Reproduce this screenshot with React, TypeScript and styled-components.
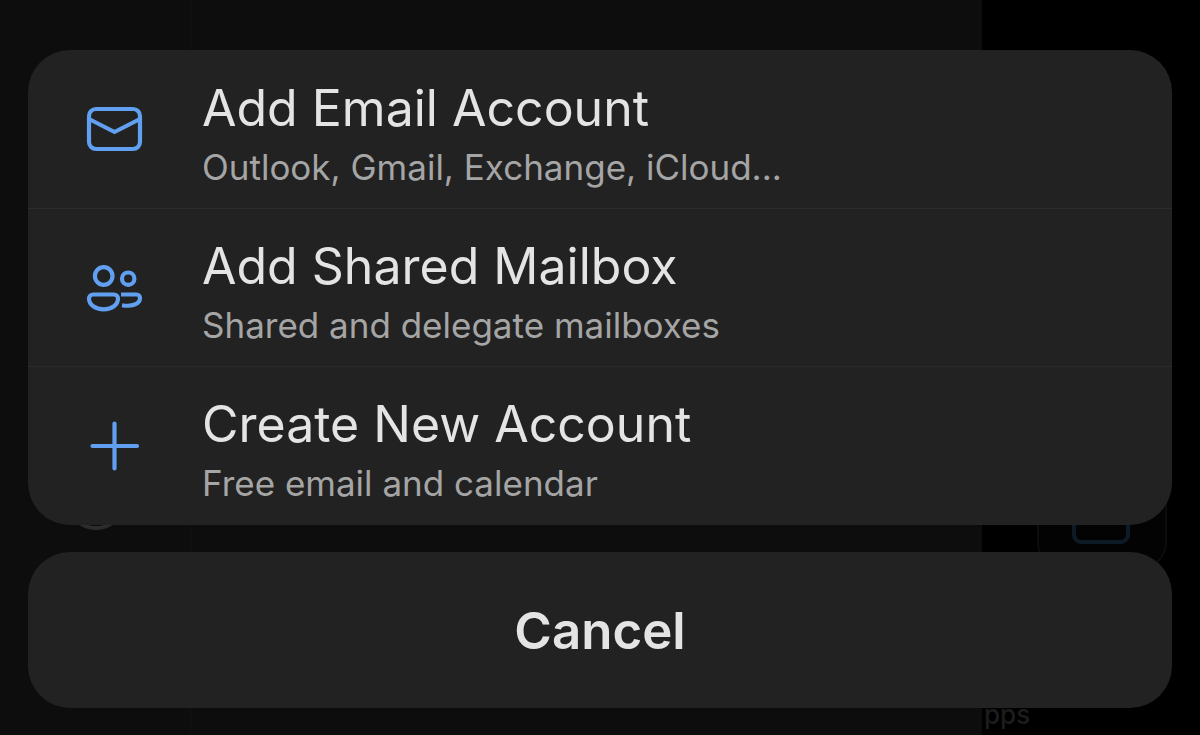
import React from "react";
import styled, { createGlobalStyle } from "styled-components";

const GlobalStyle = createGlobalStyle`
  * { box-sizing: border-box; }
  body {
    margin: 0;
    background: #000;
    font-family: Inter, "Liberation Sans", sans-serif;
  }
`;

const Screen = styled.div`
  display: grid;
  min-height: 100vh;
  overflow: hidden;
  > * { grid-area: 1 / 1; }
`;

const Backdrop = styled.div`
  display: grid;
  grid-template-columns: 191px 1fr 218px;
`;

const Sidebar = styled.div`
  background: #0d0d0d;
  border-right: 1px solid #121212;
  padding: 470px 0 0 66px;
`;

const Avatar = styled.div`
  width: 60px;
  height: 60px;
  border: 4px solid #2c2c2c;
  border-radius: 50%;
`;

const FolderPane = styled.div`
  background: #0d0d0d;
`;

const AppsPane = styled.div`
  display: flex;
  flex-direction: column;
  justify-content: space-between;
  padding: 440px 0 3px 2px;
`;

const AppTile = styled.div`
  display: flex;
  align-items: center;
  justify-content: center;
  width: 130px;
  height: 130px;
  margin-left: 53px;
  padding: 20px 2px 0 0;
  border: 2px solid #0c0c0c;
  border-radius: 28px;
  background: #030303;
`;

const AppGlyph = styled.div`
  width: 58px;
  height: 58px;
  border: 4px solid #0e1a26;
  border-radius: 9px;
`;

const PaneLabel = styled.span`
  color: #1d1d1d;
  font-size: 26px;
  font-weight: 500;
  line-height: 34px;
`;

const Sheet = styled.main`
  z-index: 1;
  display: flex;
  flex-direction: column;
  gap: 27px;
  padding: 50px 28px 27px;
`;

const Card = styled.div`
  overflow: hidden;
  padding-bottom: 1px;
  border-radius: 42px;
  background: #222;
`;

const Option = styled.button`
  display: grid;
  grid-template-columns: 60px 1fr;
  column-gap: 58px;
  align-items: center;
  width: 100%;
  padding: 24px 56px 16px;
  border: 0;
  background: none;
  color: #e4e4e4;
  font-family: inherit;
  text-align: left;
  & + & {
    padding-top: 23px;
    border-top: 1px solid #2b2b2b;
  }
`;

const OptionIcon = styled.svg`
  width: 60px;
  height: 60px;
  margin-bottom: 8px;
  fill: none;
  stroke: #619ff0;
  stroke-width: 4.2;
  stroke-linecap: round;
  stroke-linejoin: round;
`;

const OptionText = styled.span`
  display: flex;
  flex-direction: column;
`;

const Title = styled.span`
  font-size: 50px;
  line-height: 68px;
`;

const Subtitle = styled.span`
  color: #a5a5a5;
  font-size: 35px;
  line-height: 50px;
`;

const CancelButton = styled.button`
  height: 156px;
  padding: 2px 0 0;
  border: 0;
  border-radius: 42px;
  background: #222;
  color: #e4e4e4;
  font-family: inherit;
  font-size: 51px;
  font-weight: 600;
  line-height: 68px;
`;

const options = [
  {
    title: "Add Email Account",
    subtitle: "Outlook, Gmail, Exchange, iCloud...",
    icon: (
      <>
        <rect x="5" y="10" width="51" height="40" rx="7" />
        <path d="M5 20 30.500 33 56 20" />
      </>
    ),
  },
  {
    title: "Add Shared Mailbox",
    subtitle: "Shared and delegate mailboxes",
    icon: (
      <>
        <circle cx="19.700" cy="19" r="8.800" />
        <circle cx="44.200" cy="21.700" r="6.200" />
        <path d="M9 37.500H30A4 4 0 0 1 34 41.500C34 47.800 28 52.300 19.700 52.300S5 47.800 5 41.500A4 4 0 0 1 9 37.500Z" />
        <path strokeLinecap="butt" d="M37 37.500H52.500A3.500 3.500 0 0 1 56 41C56 47 48 50 38 48.200" />
      </>
    ),
  },
  {
    title: "Create New Account",
    subtitle: "Free email and calendar",
    icon: <path d="M30.500 8.500V53.500M8.500 31H53" />,
  },
];

export default function App() {
  return (
    <>
      <GlobalStyle />
      <Screen>
        <Backdrop aria-hidden="true">
          <Sidebar>
            <Avatar />
          </Sidebar>
          <FolderPane />
          <AppsPane>
            <AppTile>
              <AppGlyph />
            </AppTile>
            <PaneLabel>pps</PaneLabel>
          </AppsPane>
        </Backdrop>
        <Sheet>
          <Card>
            {options.map((option) => (
              <Option key={option.title} type="button">
                <OptionIcon viewBox="0 0 60 60" aria-hidden="true">
                  {option.icon}
                </OptionIcon>
                <OptionText>
                  <Title>{option.title}</Title>
                  <Subtitle>{option.subtitle}</Subtitle>
                </OptionText>
              </Option>
            ))}
          </Card>
          <CancelButton type="button">Cancel</CancelButton>
        </Sheet>
      </Screen>
    </>
  );
}
